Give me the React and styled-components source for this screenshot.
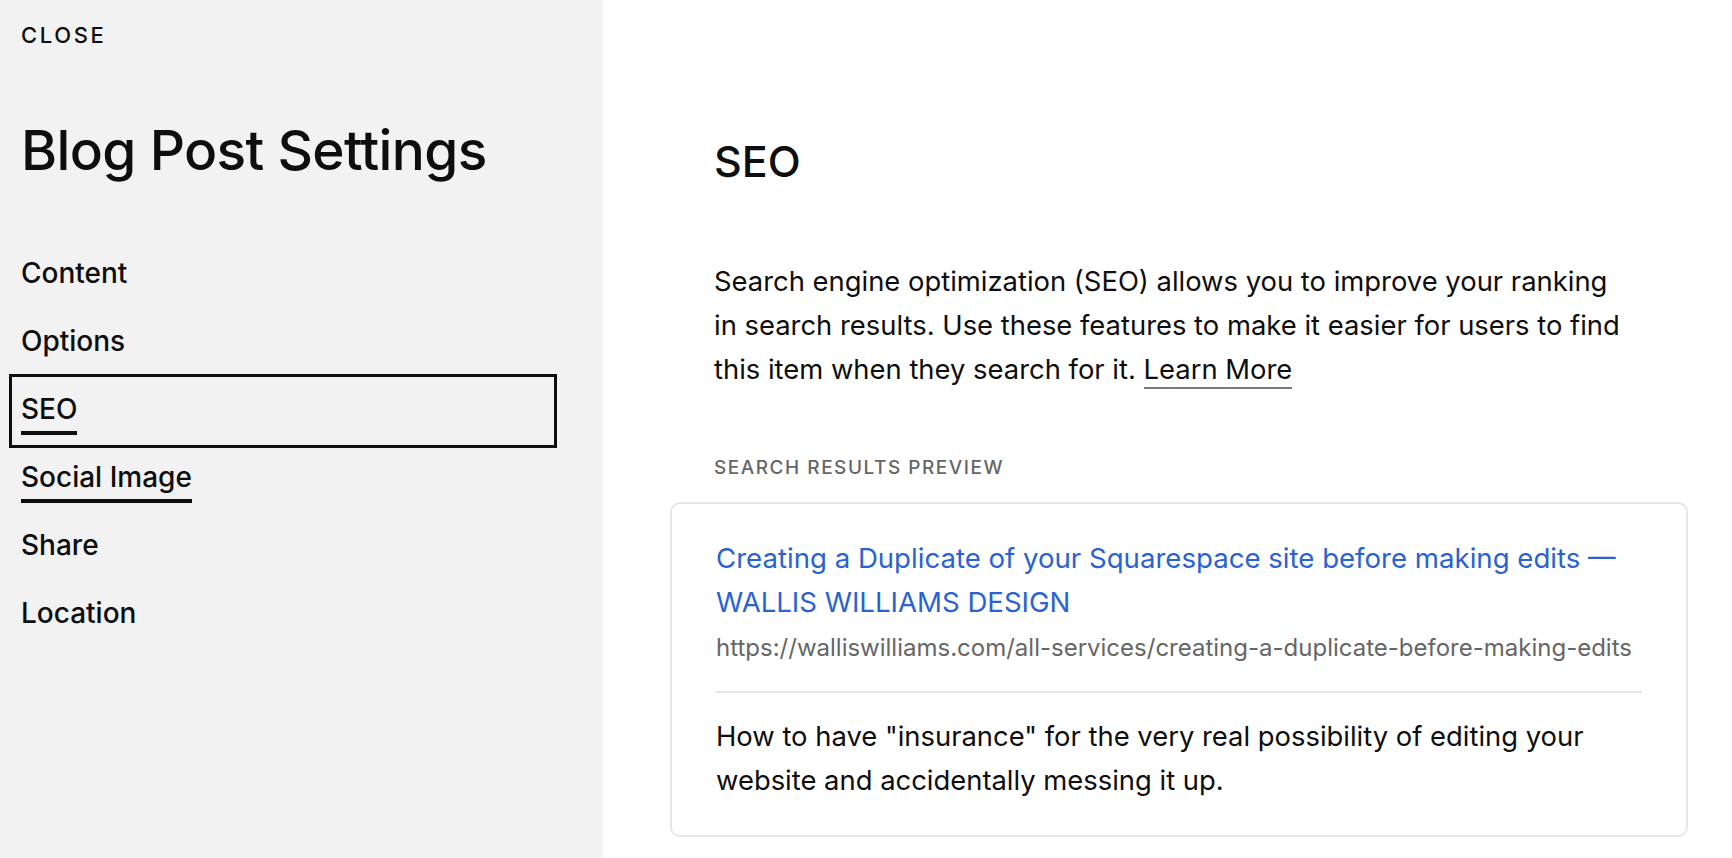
import React from "react";
import styled, { createGlobalStyle } from "styled-components";

const GlobalStyle = createGlobalStyle`
  html, body {
    margin: 0;
    padding: 0;
    background: #fff;
  }
  body {
    font-family: Inter, "Noto Sans", "Liberation Sans", sans-serif;
    color: #0e0e0e;
    -webkit-font-smoothing: antialiased;
  }
`;

const Page = styled.div`
  display: flex;
  height: 858px;
  overflow: hidden;
`;

const Sidebar = styled.aside`
  flex: 0 0 603px;
  box-sizing: border-box;
  background: #f2f2f2;
  padding: 22px 49px 0 12px;
  display: flex;
  flex-direction: column;
`;

const CloseButton = styled.div`
  padding-left: 9px;
  font-size: 22px;
  line-height: 26px;
  letter-spacing: 0.12em;
  font-weight: 500;
  text-transform: uppercase;
`;

const Title = styled.h1`
  margin: 69px 0 0;
  padding-left: 9px;
  font-size: 55px;
  line-height: 66px;
  font-weight: 500;
  letter-spacing: -0.012em;
`;

const Nav = styled.nav`
  margin-top: 58px;
  display: flex;
  flex-direction: column;
`;

const NavItem = styled.div`
  height: 68px;
  box-sizing: border-box;
  padding: 16px 0 0 9px;
  outline: ${(p) => (p.$focused ? "3px solid #0e0e0e" : "none")};
`;

const NavLabel = styled.span`
  display: inline-block;
  font-size: 28px;
  line-height: 32px;
  font-weight: 500;
  padding-bottom: 6px;
  border-bottom: 4px solid ${(p) => (p.$underlined ? "#0e0e0e" : "transparent")};
`;

const Main = styled.main`
  flex: 1;
  padding: 137px 0 0 111px;
`;

const Column = styled.div`
  width: 930px;
`;

const Heading = styled.h2`
  margin: 0;
  font-size: 43px;
  line-height: 48px;
  font-weight: 500;
`;

const Intro = styled.p`
  margin: 74px 0 0;
  max-width: 913px;
  font-size: 27.4px;
  line-height: 44px;
`;

const LearnMore = styled.a`
  color: inherit;
  text-decoration: none;
  padding-bottom: 1px;
  border-bottom: 2px solid #7a7a7a;
`;

const SectionLabel = styled.div`
  margin-top: 65px;
  font-size: 19px;
  line-height: 24px;
  font-weight: 500;
  letter-spacing: 0.08em;
  text-transform: uppercase;
  color: #666;
`;

const PreviewCard = styled.div`
  margin: 22px -44px 0;
  border: 2px solid #e6e6e6;
  border-radius: 10px;
  padding: 32px 44px 33px;
  background: #fff;
`;

const ResultTitle = styled.div`
  font-size: 27.6px;
  line-height: 44px;
  color: #2a62d2;
`;

const ResultUrl = styled.div`
  margin-top: 9px;
  font-size: 24px;
  line-height: 30px;
  color: #666;
  white-space: nowrap;
`;

const Divider = styled.hr`
  margin: 28px 0 0;
  border: 0;
  border-top: 2px solid #e6e6e6;
`;

const ResultDescription = styled.p`
  margin: 21px 0 0;
  font-size: 27.4px;
  line-height: 44px;
`;

const navItems = ["Content", "Options", "SEO", "Social Image", "Share", "Location"];

export default function App() {
  return (
    <>
      <GlobalStyle />
      <Page>
        <Sidebar>
          <CloseButton>Close</CloseButton>
          <Title>Blog Post Settings</Title>
          <Nav>
            {navItems.map((item) => (
              <NavItem key={item} $focused={item === "SEO"}>
                <NavLabel $underlined={item === "SEO" || item === "Social Image"}>
                  {item}
                </NavLabel>
              </NavItem>
            ))}
          </Nav>
        </Sidebar>
        <Main>
          <Column>
            <Heading>SEO</Heading>
            <Intro>
              Search engine optimization (SEO) allows you to improve your ranking in
              search results. Use these features to make it easier for users to find
              this item when they search for it. <LearnMore href="#">Learn More</LearnMore>
            </Intro>
            <SectionLabel>Search Results Preview</SectionLabel>
            <PreviewCard>
              <ResultTitle>
                Creating a Duplicate of your Squarespace site before making edits —
                WALLIS WILLIAMS DESIGN
              </ResultTitle>
              <ResultUrl>
                https://walliswilliams.com/all-services/creating-a-duplicate-before-making-edits
              </ResultUrl>
              <Divider />
              <ResultDescription>
                How to have "insurance" for the very real possibility of editing your
                website and accidentally messing it up.
              </ResultDescription>
            </PreviewCard>
          </Column>
        </Main>
      </Page>
    </>
  );
}
